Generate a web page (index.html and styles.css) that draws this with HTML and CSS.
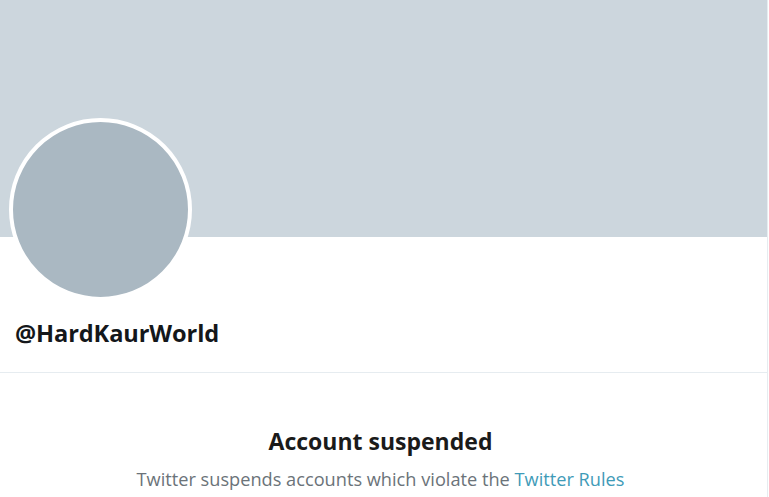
FILE: index.html
```html
<!DOCTYPE html>
<html>
<head>
<meta charset="utf-8">
<link rel="stylesheet" href="styles.css">
</head>
<body>
<div class="page">
  <div class="banner"></div>
  <div class="profile">
    <div class="avatar"></div>
    <div class="handle">@HardKaurWorld</div>
  </div>
  <div class="notice">
    <div class="title">Account suspended</div>
    <div class="sub">Twitter suspends accounts which violate the <a class="link" href="#">Twitter Rules</a></div>
  </div>
</div>
</body>
</html>
```
FILE: styles.css
```css
html, body {
  margin: 0;
  padding: 0;
  background: #ffffff;
  overflow: hidden;
}
.page {
  width: 767px;
  height: 497px;
  border-right: 1px solid #e6ecf0;
  font-family: "Open Sans", "Noto Sans", sans-serif;
  color: #14171a;
}
.banner {
  height: 237px;
  background: #ccd6dd;
}
.profile {
  display: flex;
  flex-direction: column;
  align-items: flex-start;
  padding-left: 9px;
  border-bottom: 1px solid #e6ecf0;
  height: 136px;
  box-sizing: border-box;
}
.avatar {
  width: 175px;
  height: 175px;
  flex: none;
  margin-top: -119px;
  border: 4px solid #ffffff;
  border-radius: 50%;
  background: #aab8c2;
}
.handle {
  margin-top: 16px;
  padding-left: 6px;
  font-size: 23.6px;
  font-weight: 700;
  line-height: 32px;
  letter-spacing: -0.1px;
}
.notice {
  text-align: center;
  padding-top: 52px;
}
.title {
  font-size: 23px;
  font-weight: 700;
  line-height: 32px;
  color: #1a1a1a;
  margin-left: -6px;
}
.sub {
  margin-top: 10px;
  margin-left: -6px;
  font-size: 18.2px;
  line-height: 24px;
  color: #6b7379;
}
.link {
  color: #3f9bb8;
  text-decoration: none;
}
```
